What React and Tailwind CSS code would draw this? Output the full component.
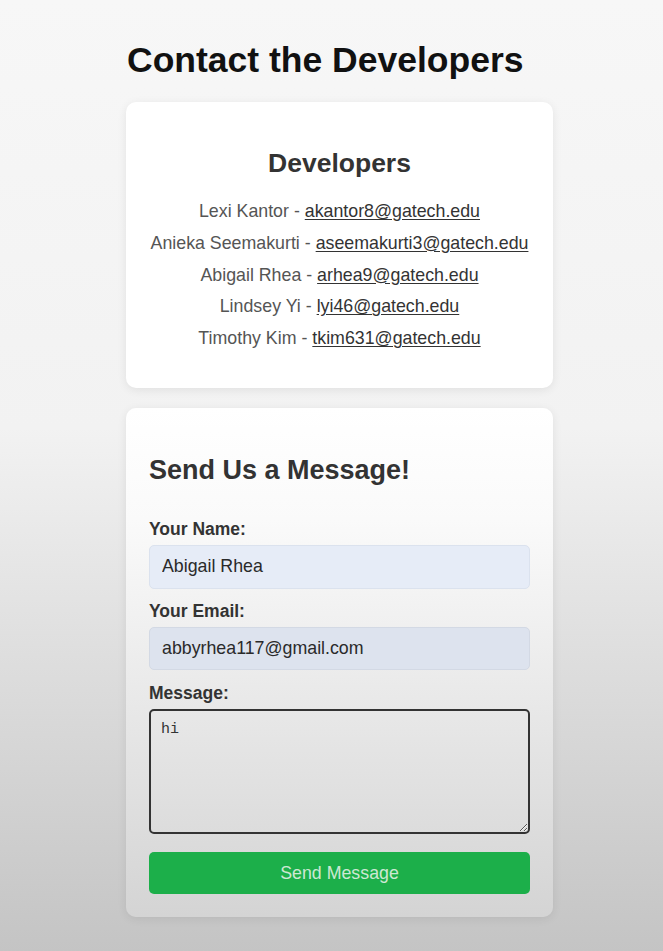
import React from 'react';

const developers = [
  { name: 'Lexi Kantor', email: 'akantor8@gatech.edu' },
  { name: 'Anieka Seemakurti', email: 'aseemakurti3@gatech.edu' },
  { name: 'Abigail Rhea', email: 'arhea9@gatech.edu' },
  { name: 'Lindsey Yi', email: 'lyi46@gatech.edu' },
  { name: 'Timothy Kim', email: 'tkim631@gatech.edu' },
];

// Developers card
const DeveloperList = () => {
  return (
    <section className="w-[427px] rounded-[10px] bg-white pt-[46px] pb-[33px] shadow-[0_2px_10px_rgba(0,0,0,0.08)]">
      <h2 className="text-center text-[26.5px] leading-[30px] font-bold text-[#333]">Developers</h2>
      <ul className="mt-[18px] text-center text-[17.8px] leading-[31.8px] text-[#555]">
        {developers.map((dev) => (
          <li key={dev.email}>
            {dev.name} -{' '}
            <a href={`mailto:${dev.email}`} className="text-[#333] underline underline-offset-2">
              {dev.email}
            </a>
          </li>
        ))}
      </ul>
    </section>
  );
};

// Contact form card
const MessageForm = () => {
  return (
    <section className="mt-[20px] w-[427px] rounded-[10px] bg-[linear-gradient(180deg,#ffffff_0%,#fafafa_22%,#d4d4d4_100%)] px-[23px] pt-[46px] pb-[23px] shadow-[0_2px_10px_rgba(0,0,0,0.08)]">
      <h2 className="text-[27px] leading-[32px] font-bold text-[#333]">Send Us a Message!</h2>
      <form className="mt-[32px] flex flex-col" onSubmit={(e) => e.preventDefault()}>
        <label className="text-[17.5px] leading-[22px] font-bold text-[#333]">Your Name:</label>
        <input
          type="text"
          defaultValue="Abigail Rhea"
          className="mt-[5px] h-[44px] rounded-[5px] border border-[#dbe2ee] bg-[#e6ecf7] px-[12px] text-[17.8px] text-[#2a2a2a] outline-none"
        />
        <label className="mt-[11px] text-[17.5px] leading-[22px] font-bold text-[#333]">Your Email:</label>
        <input
          type="email"
          defaultValue="abbyrhea117@gmail.com"
          className="mt-[5px] h-[43px] rounded-[5px] border border-[#d3d9e4] bg-[#dde3ee] px-[12px] text-[17.8px] text-[#2a2a2a] outline-none"
        />
        <label className="mt-[12px] text-[17.5px] leading-[22px] font-bold text-[#333]">Message:</label>
        <textarea
          defaultValue="hi"
          className="mt-[5px] block h-[125px] rounded-[5px] border-2 border-[#333] bg-transparent px-[10px] py-[9px] font-['Liberation_Mono',monospace] text-[15px] leading-[20px] text-[#333] outline-none"
        />
        <button
          type="submit"
          className="mt-[18px] h-[42px] rounded-[5px] bg-[#1caf4a] text-[17.8px] text-[#cde8d3]"
        >
          Send Message
        </button>
      </form>
    </section>
  );
};

const App = () => {
  return (
    <div className="min-h-[951px] bg-[linear-gradient(180deg,#f7f7f7_0%,#f2f2f2_45%,#c4c4c4_100%)] pl-[126px] pt-[43px] font-['Liberation_Sans',Arial,sans-serif]">
      <h1 className="ml-[1px] text-[35.5px] leading-[35px] font-bold text-[#111]">Contact the Developers</h1>
      <div className="mt-[24px]">
        <DeveloperList />
        <MessageForm />
      </div>
    </div>
  );
};

export default App;
